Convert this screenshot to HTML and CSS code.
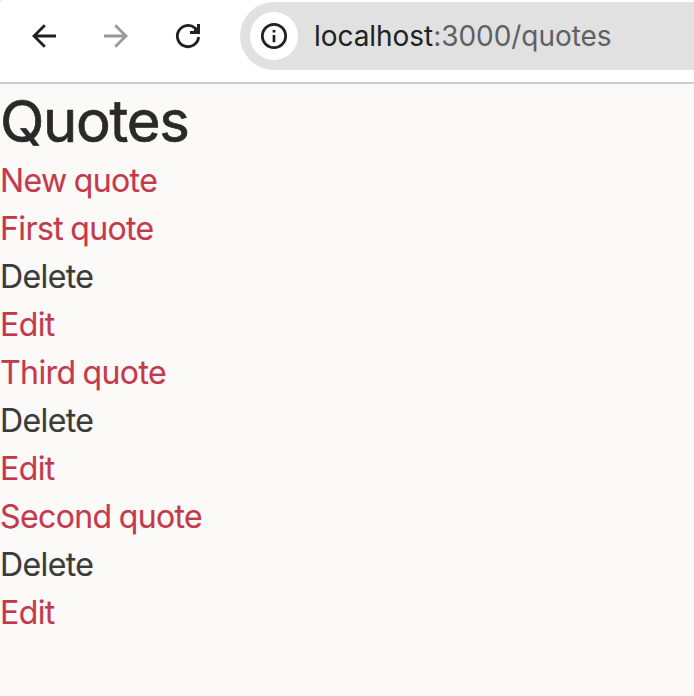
FILE: index.html
```html
<!DOCTYPE html>
<html lang="en">
<head>
<meta charset="utf-8">
<title>Quotes</title>
<link rel="stylesheet" href="styles.css">
</head>
<body>
<header class="toolbar">
  <svg class="icon" viewBox="0 0 32 32"><path d="M28 16H6M16.800 5.200 6 16l10.800 10.800"/></svg>
  <svg class="icon icon-disabled" viewBox="0 0 32 32"><path d="M4 16h22M15.200 5.200 26 16 15.200 26.800"/></svg>
  <svg class="icon" viewBox="0 0 32 32"><path d="M26.600 17A10.650 10.650 0 1 1 23.200 8.200L26 11"/><path class="solid" d="M25 4h3v10H18v-3h3.500l1.500-2.500 2-1z"/></svg>
  <div class="address">
    <span class="badge"><svg class="info" viewBox="0 0 28 28"><circle cx="14" cy="14" r="11.700"/><path d="M14 13v7.200M14 8v2.600"/></svg></span>
    <span class="url"><span class="host">localhost</span>:3000/quotes</span>
  </div>
</header>
<main class="page">
  <h1 class="title">Quotes</h1>
  <a class="link">New quote</a>
  <a class="link">First quote</a>
  <div class="action">Delete</div>
  <a class="link">Edit</a>
  <a class="link">Third quote</a>
  <div class="action">Delete</div>
  <a class="link">Edit</a>
  <a class="link">Second quote</a>
  <div class="action">Delete</div>
  <a class="link">Edit</a>
</main>
</body>
</html>
```
FILE: styles.css
```css
* { box-sizing: border-box; }
body { margin: 0; height: 696px; overflow: hidden; background: #fcfaf8; font-family: Inter, sans-serif; color: #3b3b3b; }
.toolbar { display: flex; align-items: center; height: 84px; padding: 2px 0 12px 28px; gap: 40px; background: radial-gradient(circle at 4px 4px, #fff 4px, #b5e09b 5.500px) 0 0 / 4px 4px no-repeat #fff; border-bottom: 2px solid #cdcdcd; }
.icon { flex: none; width: 32px; height: 32px; fill: none; stroke: #202124; stroke-width: 2.800; }
.icon-disabled { stroke: #999; }
.solid { fill: #202124; stroke: none; }
.address { display: flex; align-items: center; flex: 1; height: 68px; margin-left: -4px; padding-left: 10px; gap: 16px; background: #e1e1e1; border-radius: 34px 0 0 34px; white-space: nowrap; }
.badge { display: flex; align-items: center; justify-content: center; width: 48px; height: 48px; border-radius: 50%; background: #fff; }
.info { width: 28px; height: 28px; fill: none; stroke: #202124; stroke-width: 2.700; }
.url { font-size: 28px; letter-spacing: -0.050px; color: #5f6063; }
.host { color: #202124; }
.page { padding-top: 1px; }
.title { margin: 0; height: 72px; font-size: 58px; font-weight: 400; line-height: 72px; letter-spacing: -1.300px; color: #292929; -webkit-text-stroke: 0.700px #292929; }
.link, .action { display: block; height: 48px; font-size: 32px; font-weight: 400; line-height: 48px; letter-spacing: -0.600px; word-spacing: -1.300px; white-space: nowrap; -webkit-text-stroke: 0.150px currentColor; }
.link { color: #c53a4b; }
```
